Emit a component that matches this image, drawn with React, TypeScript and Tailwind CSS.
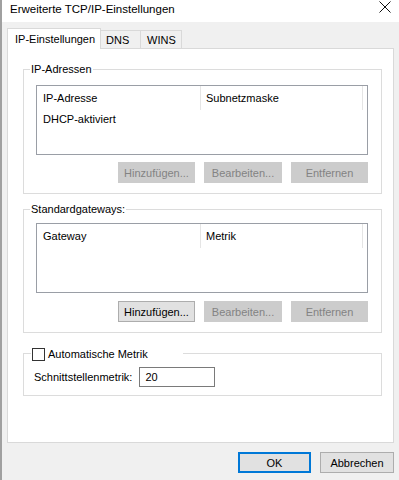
import React from "react";

const font = "font-['Liberation_Sans','Arial',sans-serif]";

function Btn({ label, disabled, primary, w }: { label: string; disabled?: boolean; primary?: boolean; w: string }) {
  if (disabled) {
    return (
      <div className={`${w} h-[21px] flex items-center justify-center bg-[#cccccc] text-[#838383] border border-[#cccccc] whitespace-nowrap`}>
        {label}
      </div>
    );
  }
  if (primary) {
    return (
      <div className={`${w} h-[21px] flex items-center justify-center bg-[#e1e1e1] text-black border-2 border-[#0078d7] whitespace-nowrap`}>
        {label}
      </div>
    );
  }
  return (
    <div className={`${w} h-[21px] flex items-center justify-center bg-[#e1e1e1] text-black border border-[#adadad] whitespace-nowrap`}>
      {label}
    </div>
  );
}

function ListBox({ c1, c2, rows, top }: { c1: string; c2: string; rows: string[]; top: string }) {
  return (
    <div className={`${top} ml-[12px] w-[332px] h-[70px] border border-[#9a9ea6] bg-white flex flex-col`}>
      <div className="h-[24px] flex items-center">
        <div className="w-[164px] h-full flex items-center pl-[6px] border-r border-[#e5e5e5]">{c1}</div>
        <div className="w-[162px] h-full flex items-center pl-[5px] border-r border-[#e5e5e5]">{c2}</div>
      </div>
      {rows.map((r) => (
        <div key={r} className="h-[18px] flex items-center pl-[6px]">
          {r}
        </div>
      ))}
    </div>
  );
}

function ButtonRow({ top, addEnabled }: { top: string; addEnabled?: boolean }) {
  return (
    <div className={`${top} flex justify-end gap-[9px] pr-[13px]`}>
      <Btn label="Hinzufügen..." disabled={!addEnabled} w="w-[77px]" />
      <Btn label="Bearbeiten..." disabled w="w-[78px]" />
      <Btn label="Entfernen" disabled w="w-[77px]" />
    </div>
  );
}

export default function App() {
  return (
    <div className={`${font} text-[11px] leading-[16px] text-black w-[399px] h-[480px] bg-[#f0f0f0] border-l-2 border-[#a0a0a0] flex flex-col overflow-hidden`}>
      {/* title bar */}
      <div className="h-[22px] bg-white flex items-start justify-between pl-[8px] pr-[8px]">
        <div className="pt-[1px] text-[11.5px] text-black whitespace-nowrap">Erweiterte TCP/IP-Einstellungen</div>
        <svg width="12" height="12" viewBox="0 0 12 12" className="mt-[1px]">
          <path d="M0.5 0.5 L11.5 11.5 M11.5 0.5 L0.5 11.5" stroke="#111" strokeWidth="1" fill="none" />
        </svg>
      </div>

      {/* tabs */}
      <div className="mt-[6px] ml-[5px] flex items-end relative z-10">
        <div className="w-[94px] h-[21px] bg-white border border-b-0 border-[#d9d9d9] flex items-center pl-[7px] -mb-px whitespace-nowrap">
          IP-Einstellungen
        </div>
        <div className="w-[40px] h-[18px] bg-[#f0f0f0] border-t border-r border-[#d9d9d9] flex items-center pl-[5px]">
          DNS
        </div>
        <div className="w-[41px] h-[18px] bg-[#f0f0f0] border-t border-r border-[#d9d9d9] flex items-center pl-[6px]">
          WINS
        </div>
      </div>

      {/* tab page */}
      <div className="ml-[5px] w-[387px] h-[395px] bg-white border border-[#d9d9d9] flex flex-col">
        {/* group 1 */}
        <div className="mt-[20px] ml-[15px] w-[359px] h-[125px] border border-[#dcdcdc] relative">
          <span className="absolute top-[-9px] left-[6px] px-[1px] bg-white">IP-Adressen</span>
          <ListBox top="mt-[15px]" c1="IP-Adresse" c2="Subnetzmaske" rows={["DHCP-aktiviert"]} />
          <ButtonRow top="mt-[7px]" />
        </div>

        {/* group 2 */}
        <div className="mt-[15px] ml-[15px] w-[359px] h-[124px] border border-[#dcdcdc] relative">
          <span className="absolute top-[-9px] left-[6px] px-[1px] bg-white">Standardgateways:</span>
          <ListBox top="mt-[13px]" c1="Gateway" c2="Metrik" rows={[]} />
          <ButtonRow top="mt-[8px]" addEnabled />
        </div>

        {/* group 3 */}
        <div className="mt-[20px] ml-[15px] w-[359px] h-[43px] border border-[#dcdcdc] relative">
          <div className="absolute top-[-8px] left-[7px] w-[152px] h-[16px] bg-white flex items-center pl-[1px] gap-[3px]">
            <div className="w-[13px] h-[13px] border border-[#333333] bg-white" />
            <span>Automatische Metrik</span>
          </div>
          <div className="mt-[13px] ml-[10px] flex items-center gap-[7px]">
            <span>Schnittstellenmetrik:</span>
            <div className="w-[76px] h-[20px] border border-[#7a7a7a] bg-white flex items-center pl-[5px]">20</div>
          </div>
        </div>
      </div>

      {/* bottom buttons */}
      <div className="mt-[9px] flex justify-end gap-[9px] pr-[5px]">
        <Btn label="OK" primary w="w-[73px]" />
        <Btn label="Abbrechen" w="w-[74px]" />
      </div>
    </div>
  );
}
